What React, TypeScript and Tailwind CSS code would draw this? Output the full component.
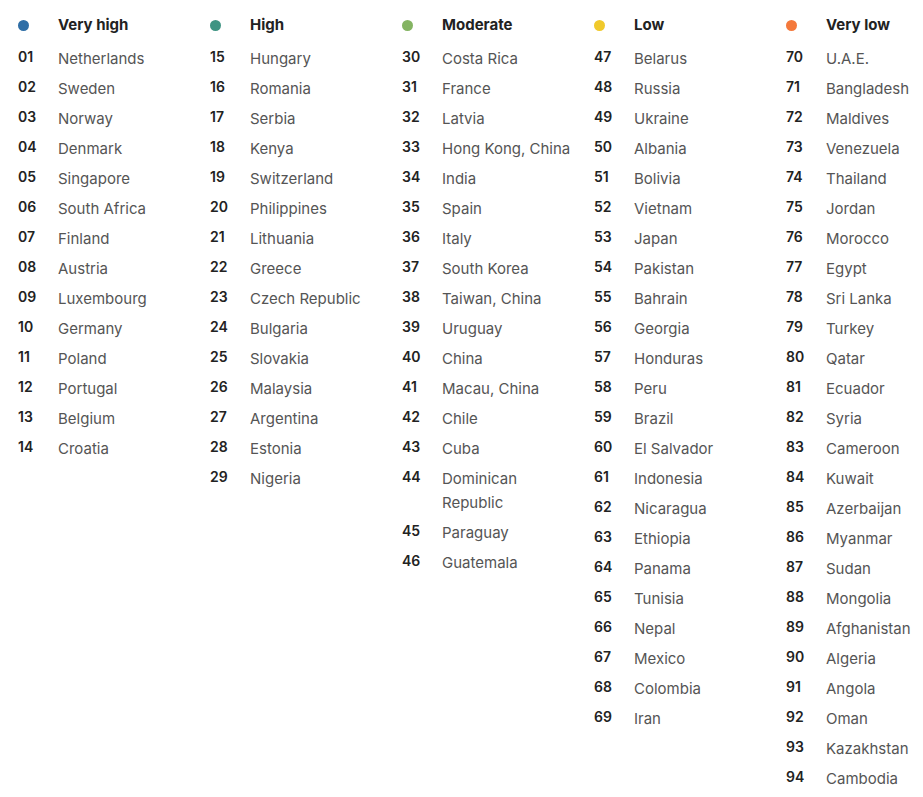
import React from "react";

type Col = { title: string; color: string; start: number; items: string[] };

const cols: Col[] = [
  {
    title: "Very high",
    color: "bg-[#2f6ea6]",
    start: 1,
    items: ["Netherlands", "Sweden", "Norway", "Denmark", "Singapore", "South Africa", "Finland", "Austria", "Luxembourg", "Germany", "Poland", "Portugal", "Belgium", "Croatia"],
  },
  {
    title: "High",
    color: "bg-[#3f9483]",
    start: 15,
    items: ["Hungary", "Romania", "Serbia", "Kenya", "Switzerland", "Philippines", "Lithuania", "Greece", "Czech Republic", "Bulgaria", "Slovakia", "Malaysia", "Argentina", "Estonia", "Nigeria"],
  },
  {
    title: "Moderate",
    color: "bg-[#84b462]",
    start: 30,
    items: ["Costa Rica", "France", "Latvia", "Hong Kong, China", "India", "Spain", "Italy", "South Korea", "Taiwan, China", "Uruguay", "China", "Macau, China", "Chile", "Cuba", "Dominican Republic", "Paraguay", "Guatemala"],
  },
  {
    title: "Low",
    color: "bg-[#f0c92b]",
    start: 47,
    items: ["Belarus", "Russia", "Ukraine", "Albania", "Bolivia", "Vietnam", "Japan", "Pakistan", "Bahrain", "Georgia", "Honduras", "Peru", "Brazil", "El Salvador", "Indonesia", "Nicaragua", "Ethiopia", "Panama", "Tunisia", "Nepal", "Mexico", "Colombia", "Iran"],
  },
  {
    title: "Very low",
    color: "bg-[#f4793b]",
    start: 70,
    items: ["U.A.E.", "Bangladesh", "Maldives", "Venezuela", "Thailand", "Jordan", "Morocco", "Egypt", "Sri Lanka", "Turkey", "Qatar", "Ecuador", "Syria", "Cameroon", "Kuwait", "Azerbaijan", "Myanmar", "Sudan", "Mongolia", "Afghanistan", "Algeria", "Angola", "Oman", "Kazakhstan", "Cambodia"],
  },
];

export default function App() {
  return (
    <div
      className="bg-white w-[923px] h-[797px] overflow-hidden pt-[13px] flex"
      style={{ fontFamily: "Inter, 'Noto Sans', sans-serif" }}
    >
      {cols.map((c) => (
        <div key={c.title} className="w-[192px] shrink-0 pl-[18px]">
          <div className="flex items-center h-6">
            <span className={`block shrink-0 w-[11px] h-[11px] rounded-full ${c.color}`} />
            <span className="ml-[29px] text-[15px] font-bold text-[#222] leading-6">{c.title}</span>
          </div>
          <ul className="mt-[10px]">
            {c.items.map((name, i) => {
              const n = c.start + i;
              return (
                <li key={name} className="flex items-start mb-[6px]">
                  <span className="w-10 shrink-0 text-[14px] font-semibold text-[#222] leading-5">
                    {n < 10 ? `0${n}` : n}
                  </span>
                  <span className="w-[134px] text-[15px] text-[#555] leading-6">{name}</span>
                </li>
              );
            })}
          </ul>
        </div>
      ))}
    </div>
  );
}
